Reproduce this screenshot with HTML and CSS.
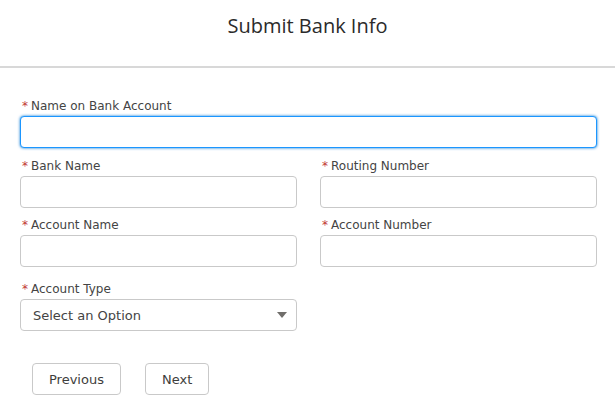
FILE: index.html
```html
<!DOCTYPE html>
<html>
<head>
<meta charset="utf-8">
<link rel="stylesheet" href="styles.css">
</head>
<body>
<div class="header"><h1 class="title">Submit Bank Info</h1></div>
<form class="form">
  <div class="row">
    <div class="field full">
      <label class="label"><span class="req">*</span>Name on Bank Account</label>
      <div class="input focus"></div>
    </div>
  </div>
  <div class="row two tight">
    <div class="field">
      <label class="label"><span class="req">*</span>Bank Name</label>
      <div class="input"></div>
    </div>
    <div class="field">
      <label class="label"><span class="req">*</span>Routing Number</label>
      <div class="input"></div>
    </div>
  </div>
  <div class="row two">
    <div class="field">
      <label class="label"><span class="req">*</span>Account Name</label>
      <div class="input"></div>
    </div>
    <div class="field">
      <label class="label"><span class="req">*</span>Account Number</label>
      <div class="input"></div>
    </div>
  </div>
  <div class="row two last">
    <div class="field">
      <label class="label"><span class="req">*</span>Account Type</label>
      <div class="input select"><span>Select an Option</span><span class="caret"></span></div>
    </div>
  </div>
  <div class="buttons">
    <button type="button" class="btn">Previous</button>
    <button type="button" class="btn">Next</button>
  </div>
</form>
</body>
</html>
```
FILE: styles.css
```css
html, body {
  margin: 0;
  padding: 0;
  background: #ffffff;
  font-family: "DejaVu Sans", Verdana, sans-serif;
  color: #3e3e3c;
}
.header {
  height: 66px;
  border-bottom: 2px solid #d8d8d8;
  display: flex;
  justify-content: center;
}
.title {
  margin: 13px 0 0 0;
  font-family: "Open Sans", sans-serif;
  font-weight: 400;
  font-size: 20px;
  line-height: 26px;
  color: #2b2b2b;
}
.form {
  padding: 29px 18px 0 20px;
  display: flex;
  flex-direction: column;
}
.row {
  display: grid;
  grid-template-columns: 1fr;
  margin-bottom: 9px;
}
.row.two {
  grid-template-columns: 1fr 1fr;
  column-gap: 23px;
}
.row.tight {
  margin-bottom: 8px;
}
.row.last {
  margin-top: 4px;
}
.field {
  display: flex;
  flex-direction: column;
}
.label {
  font-size: 12px;
  line-height: 18px;
  height: 19px;
  padding-left: 2px;
  color: #444444;
}
.req {
  color: #c23934;
  margin-right: 3px;
}
.input {
  height: 30px;
  border: 1px solid #c9c9c9;
  border-radius: 4px;
  background: #fff;
}
.input.focus {
  border-color: #1b96ff;
  box-shadow: 0 0 3px #0176d3;
}
.select {
  display: flex;
  align-items: center;
  justify-content: space-between;
  padding: 0 9px 0 12px;
  font-size: 13px;
  color: #444444;
}
.caret {
  width: 0;
  height: 0;
  border-left: 5px solid transparent;
  border-right: 5px solid transparent;
  border-top: 6px solid #706e6b;
}
.buttons {
  display: flex;
  gap: 24px;
  padding-left: 12px;
  margin-top: 23px;
}
.btn {
  height: 32px;
  padding: 0 16px;
  border: 1px solid #c9c9c9;
  border-radius: 4px;
  background: #fff;
  font-family: "DejaVu Sans", Verdana, sans-serif;
  font-size: 13px;
  color: #3e3e3c;
}
```
